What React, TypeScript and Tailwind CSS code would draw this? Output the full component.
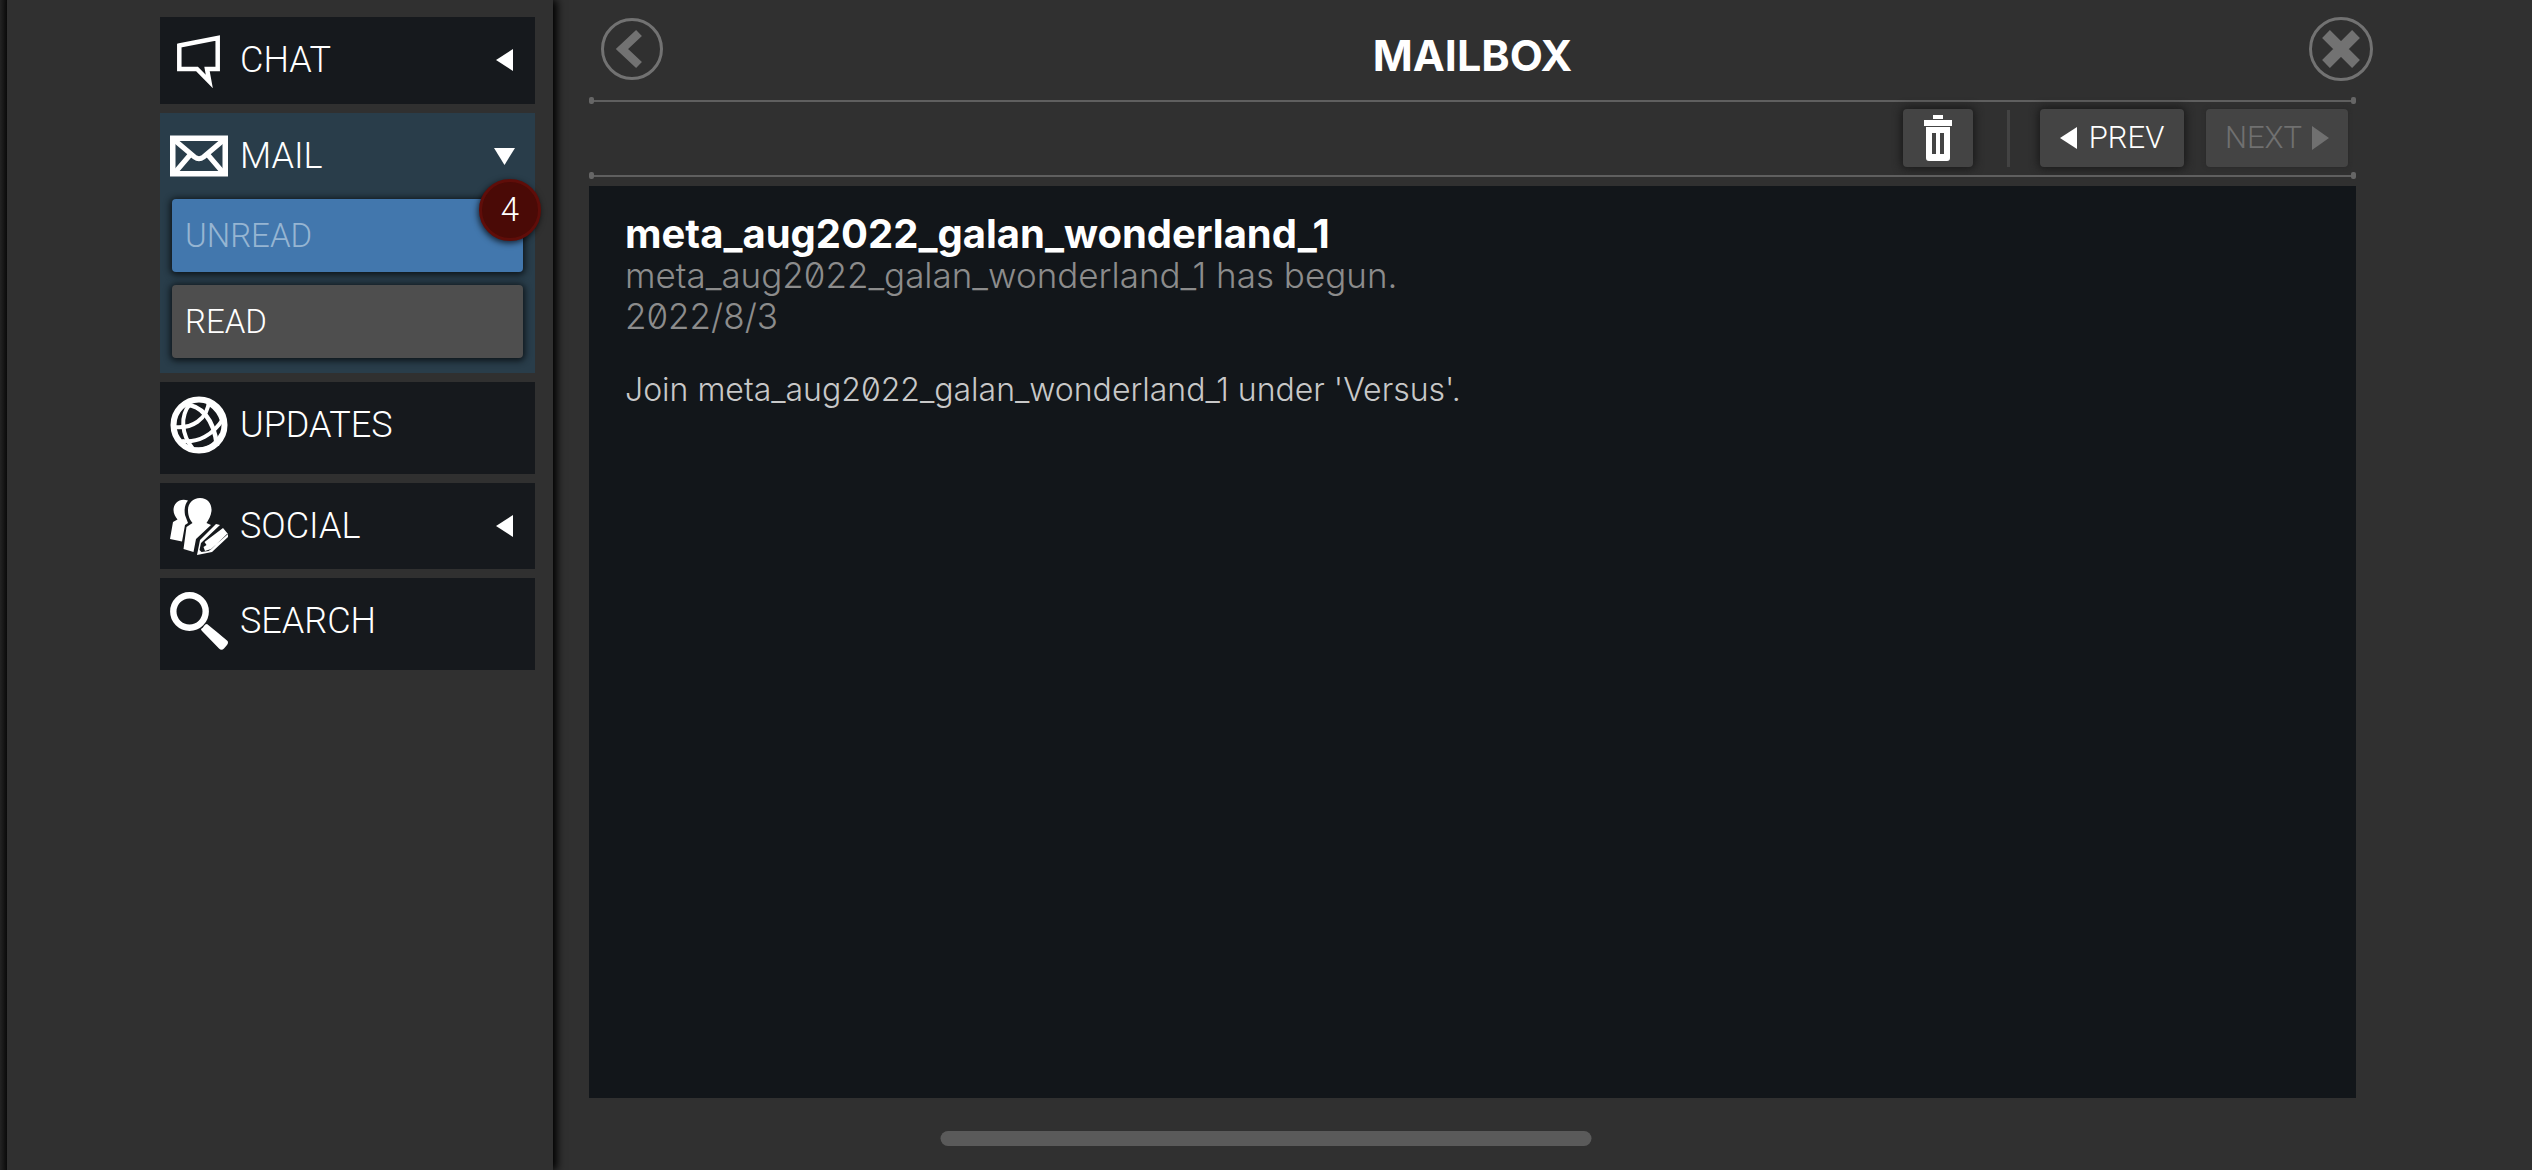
import type { ReactNode } from "react";
import clsx from "clsx";

const ArrowLeft = () => (
  <svg className="w-[17px] h-[22px]" viewBox="0 0 17 22" fill="currentColor">
    <path d="M17 0v22L0 11z" />
  </svg>
);

const ArrowRight = () => (
  <svg className="w-[17px] h-[24px]" viewBox="0 0 17 24" fill="currentColor">
    <path d="M0 0v24L17 12z" />
  </svg>
);

const ArrowDown = () => (
  <svg className="w-[21px] h-[17px]" viewBox="0 0 21 17" fill="currentColor">
    <path d="M0 0h21L10.500 17z" />
  </svg>
);

const ChatIcon = () => (
  <svg className="size-[58px]" viewBox="0 0 58 58" fill="none" stroke="currentColor" strokeWidth="4.500">
    <path d="M9.300 14.500 47.700 7v31H37l2.300 12.500L27 38H9.300z" strokeMiterlimit="6" />
  </svg>
);

const MailIcon = () => (
  <svg className="size-[58px]" viewBox="0 0 58 58" fill="none" stroke="currentColor" strokeWidth="5.500">
    <path d="M2.750 11.250h52.500v35.500H2.750z" />
    <path d="M5 13.500 24.500 30q4.500 3.500 9 0L53 13.500M5 45.500 20 28M53 45.500 38 28" strokeWidth="5" />
  </svg>
);

const GlobeIcon = () => (
  <svg className="size-[58px]" viewBox="0 0 58 58" fill="none" stroke="currentColor" strokeWidth="4">
    <circle cx="29" cy="29" r="25.500" strokeWidth="6" />
    <path d="M16 9C30 9 44 22 47 50" strokeWidth="4.500" />
    <path d="M4 31c17 2 34-7 35-27" />
    <path d="M20 8C10 20 11 38 23 53" />
    <path d="M12 45c16 2 31-6 41-22" />
    <path d="M40 9c6 4 10 10 12 17M24 53c12 0 21-3 27-15" strokeWidth="3" />
  </svg>
);

const SocialIcon = () => (
  <svg className="size-[58px]" viewBox="0 0 58 58" fill="currentColor">
    <path d="M18 3.500C10 .500 3.500 6 3.500 13c0 4 2 7 4 9.500L3 25 0 42l12 2.500L15 28l3-2-3-8c-1-6 0-11 3-14.500z" />
    <path d="M30 1c8 0 12 6 11.500 13-.500 5-3 9-5 12l4.500 2-15 14-2.500 13L13.500 52l3-22 6-4C20 23 18 19 18 13c0-7 5-12 12-12z" />
    <path
      fillRule="evenodd"
      d="M46 27l4 1-19 18-1.500 7 2 2 7-1 3-2L58 36v4L42 55l-15 3 3-15zM53 31l5 6-17 15-6 2-1.500-4 3-2-2-3z"
    />
  </svg>
);

const SearchIcon = () => (
  <svg className="size-[58px]" viewBox="0 0 58 58" fill="none" stroke="currentColor">
    <circle cx="19.500" cy="19.500" r="16.200" strokeWidth="6.400" />
    <path
      d="M31 37q2-1 3-3 1-2 3-2 10 8 20 16.500 2 1.500 0 4.500l-3 3.500q-2.500 2.500-5 0L32 39q-1-1-1-2z"
      fill="currentColor"
      stroke="none"
    />
  </svg>
);

const TrashIcon = () => (
  <svg className="w-[28px] h-[46px]" viewBox="0 0 28 46" fill="currentColor">
    <path d="M9 0h10v4H9zM0 5h28v6H0z" />
    <path
      fillRule="evenodd"
      d="M2 12h24v31q0 3-3 3H5q-3 0-3-3zM8 18v21h4V18zM16 18v21h4V18z"
    />
  </svg>
);

type NavItemProps = {
  icon: ReactNode;
  label: string;
  arrow?: ReactNode;
  active?: boolean;
  className?: string;
  children?: ReactNode;
};

const NavItem = ({ icon, label, arrow, active, className, children }: NavItemProps) => {
  return (
    <li className={clsx(active ? "bg-[#293d4a]" : "bg-[#16191d]", className)}>
      <button className="flex h-[86px] w-full items-center pl-[10px] text-left text-[36px] leading-[40px] font-light">
        {icon}
        <span className="ml-3 flex-1">{label}</span>
        {arrow && <span className="flex w-[62px] justify-center">{arrow}</span>}
      </button>
      {children}
    </li>
  );
};

const Rule = () => {
  return (
    <div className="flex h-[7px] items-center">
      <span className="h-[7px] w-[5px] rounded-[2px] bg-[#666]" />
      <span className="h-[2px] flex-1 bg-[#5f5f5f]" />
      <span className="h-[7px] w-[5px] rounded-[2px] bg-[#666]" />
    </div>
  );
};

const Sidebar = () => {
  return (
    <aside className="w-[546px] shrink-0 pt-[17px] pr-[18px] pl-[153px] shadow-[4px_0_8px_#000]">
      <ul className="flex flex-col gap-[9px]">
        <NavItem icon={<ChatIcon />} label="CHAT" arrow={<ArrowLeft />} className="pb-px" />
        <NavItem icon={<MailIcon />} label="MAIL" arrow={<ArrowDown />} active>
          <div className="flex flex-col gap-[13px] px-3 pb-[15px] text-[33px] leading-[40px] font-light">
            <button className="relative h-[73px] rounded-[4px] bg-[#4277ad] px-[13px] text-left text-[#96b5d2] shadow-[0_1px_6px_2px_#0e161b]">
              UNREAD
              <span className="absolute -top-5 -right-[18px] flex size-[62px] items-center justify-center rounded-full border-[3px] border-[#5f0d09] bg-[#4a0a06] text-white shadow-[-1px_2px_6px_#000b]">
                4
              </span>
            </button>
            <button className="h-[73px] rounded-[4px] bg-[#4e4e4e] px-[13px] text-left shadow-[0_1px_6px_2px_#0e161b]">
              READ
            </button>
          </div>
        </NavItem>
        <NavItem icon={<GlobeIcon />} label="UPDATES" className="pb-[6px]" />
        <NavItem icon={<SocialIcon />} label="SOCIAL" arrow={<ArrowLeft />} />
        <NavItem icon={<SearchIcon />} label="SEARCH" className="pb-[6px]" />
      </ul>
    </aside>
  );
};

const Toolbar = () => {
  return (
    <div className="flex h-[68px] items-center justify-end pr-2 text-[31px] leading-[40px] font-light">
      <button
        aria-label="Delete"
        className="flex h-[58px] w-[70px] items-center justify-center rounded-[4px] bg-[#444] shadow-[0_0_9px_2px_#1a1a1a]"
      >
        <TrashIcon />
      </button>
      <span className="mr-[30px] ml-[34px] h-[57px] w-[3px] bg-[#434343]" />
      <button className="flex h-[58px] w-[144px] items-center justify-center gap-3 rounded-[4px] bg-[#444] shadow-[0_0_9px_2px_#1a1a1a]">
        <ArrowLeft />
        PREV
      </button>
      <button
        disabled
        className="ml-[22px] flex h-[58px] w-[142px] items-center justify-center gap-[10px] rounded-[4px] bg-[#444] text-[#707070] shadow-[0_0_4px_#292929]"
      >
        NEXT
        <ArrowRight />
      </button>
    </div>
  );
};

const Message = () => {
  return (
    <article className="flex-1 bg-[#12161a] px-9 pt-[27px] font-['Inter','Liberation_Sans',sans-serif] text-[35px] leading-[41px] font-light text-[#8c8c8c] [font-feature-settings:'zero']">
      <h2 className="text-[40px] leading-[42px] font-bold text-white [font-feature-settings:normal]">
        meta_aug2022_galan_wonderland_1
      </h2>
      <p>meta_aug2022_galan_wonderland_1 has begun.</p>
      <p>2022/8/3</p>
      <p className="mt-8 text-[32px] leading-[41px] text-[#c8c8c8]">
        Join meta_aug2022_galan_wonderland_1 under 'Versus'.
      </p>
    </article>
  );
};

export default function App() {
  return (
    <div className="relative flex min-h-screen bg-[#303030] font-['Roboto','Liberation_Sans',sans-serif] text-white">
      <div className="w-[7px] shrink-0 bg-linear-to-r from-[#242424] to-[#0c0c0c]" />
      <Sidebar />
      <main className="flex flex-1 flex-col pr-[176px] pb-[72px] pl-9">
        <header className="grid h-[97px] grid-cols-[1fr_auto_1fr] items-center">
          <button aria-label="Back" className="ml-3 justify-self-start text-[#727272]">
            <svg className="size-[62px]" viewBox="0 0 62 62" fill="none" stroke="currentColor">
              <circle cx="31" cy="31" r="29.500" strokeWidth="3" />
              <path d="M38 15 21 31l17 16" strokeWidth="8.500" />
            </svg>
          </button>
          <h1 className="pt-3 font-['Inter','Liberation_Sans',sans-serif] text-[43px] leading-[52px] font-bold">MAILBOX</h1>
          <button aria-label="Close" className="-mr-[17px] justify-self-end text-[#727272]">
            <svg className="size-[64px]" viewBox="0 0 64 64" fill="none" stroke="currentColor">
              <circle cx="32" cy="32" r="30.500" strokeWidth="3" />
              <path d="M17 17l30 30M47 17 17 47" strokeWidth="11" />
            </svg>
          </button>
        </header>
        <Rule />
        <Toolbar />
        <Rule />
        <div className="mt-[7px] flex flex-1 flex-col">
          <Message />
        </div>
      </main>
      <div className="absolute bottom-6 left-1/2 h-[15px] w-[651px] -translate-x-1/2 rounded-full bg-[#5a5a5a]" />
    </div>
  );
}
